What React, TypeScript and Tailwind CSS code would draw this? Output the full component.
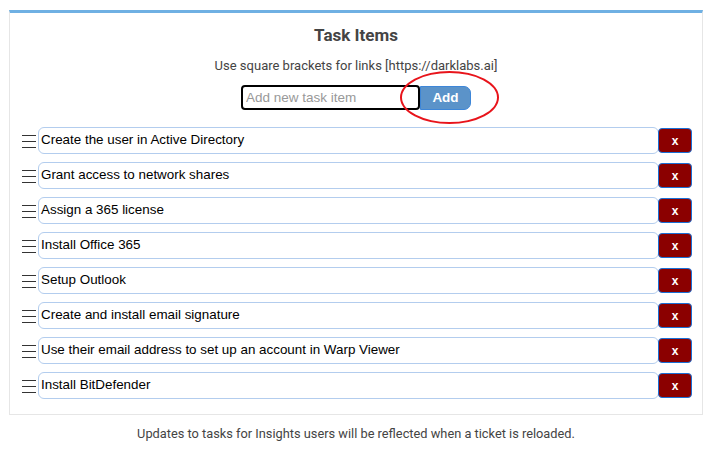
const tasks = [
    "Create the user in Active Directory",
    "Grant access to network shares",
    "Assign a 365 license",
    "Install Office 365",
    "Setup Outlook",
    "Create and install email signature",
    "Use their email address to set up an account in Warp Viewer",
    "Install BitDefender",
];

const Handle = () => (
    <svg width="14" height="16" viewBox="0 0 14 16" className="shrink-0">
        <line x1="0" y1="2.5" x2="14" y2="2.5" stroke="#333" strokeWidth="1" />
        <line x1="0" y1="8.5" x2="14" y2="8.5" stroke="#333" strokeWidth="1" />
        <line x1="0" y1="14.5" x2="14" y2="14.5" stroke="#333" strokeWidth="1" />
    </svg>
);

export default function App() {
    return (
        <div className="w-[712px] h-[449px] bg-white font-['Roboto',sans-serif] text-[#444] pt-[10px]">
            <div className="mx-[9px] border border-[#e6e6e6] border-t-[3px] border-t-[#6fb0e3] pb-[15px]">
                <h2 className="text-center text-[17px] font-bold text-[#444] mt-[11px] leading-[22px]">
                    Task Items
                </h2>
                <p className="text-center text-[13px] mt-[12px] leading-[16px]">
                    Use square brackets for links [https://darklabs.ai]
                </p>
                <div className="flex justify-center mt-[11px]">
                    <div className="relative flex">
                        <input
                            className="w-[179px] h-[25px] border-2 border-black rounded-[4px] px-[3px] text-[13.5px] font-['Liberation_Sans',sans-serif] placeholder:text-[#999] outline-none"
                            placeholder="Add new task item"
                        />
                        <button className="w-[51px] h-[24px] mt-[1px] bg-[#5b93c9] text-white font-bold text-[13.5px] rounded-r-[7px] border border-[#3d86d8] font-['Liberation_Sans',sans-serif]">
                            Add
                        </button>
                        <div className="absolute left-[159px] top-[-14px] w-[99px] h-[53px] rounded-[50%] border-2 border-[#e8141b] pointer-events-none" />
                    </div>
                </div>
                <div className="mt-[17px] flex flex-col gap-[8px] pl-[12px] pr-[10px]">
                    {tasks.map((t) => (
                        <div key={t} className="flex items-center">
                            <Handle />
                            <div className="flex-1 ml-[2px] h-[27px] border border-[#b3cdee] rounded-[6px] flex items-center px-[2px] text-[13.4px] text-black font-['Liberation_Sans',sans-serif]">
                                {t}
                            </div>
                            <button className="w-[34px] h-[25px] ml-[-1px] bg-[#8b0000] border border-[#1a6fd6] rounded-[4px] text-white font-bold text-[12px] font-['Liberation_Sans',sans-serif] leading-none">
                                x
                            </button>
                        </div>
                    ))}
                </div>
            </div>
            <p className="text-center text-[12.8px] mt-[9px]">
                Updates to tasks for Insights users will be reflected when a ticket is reloaded.
            </p>
        </div>
    );
}
